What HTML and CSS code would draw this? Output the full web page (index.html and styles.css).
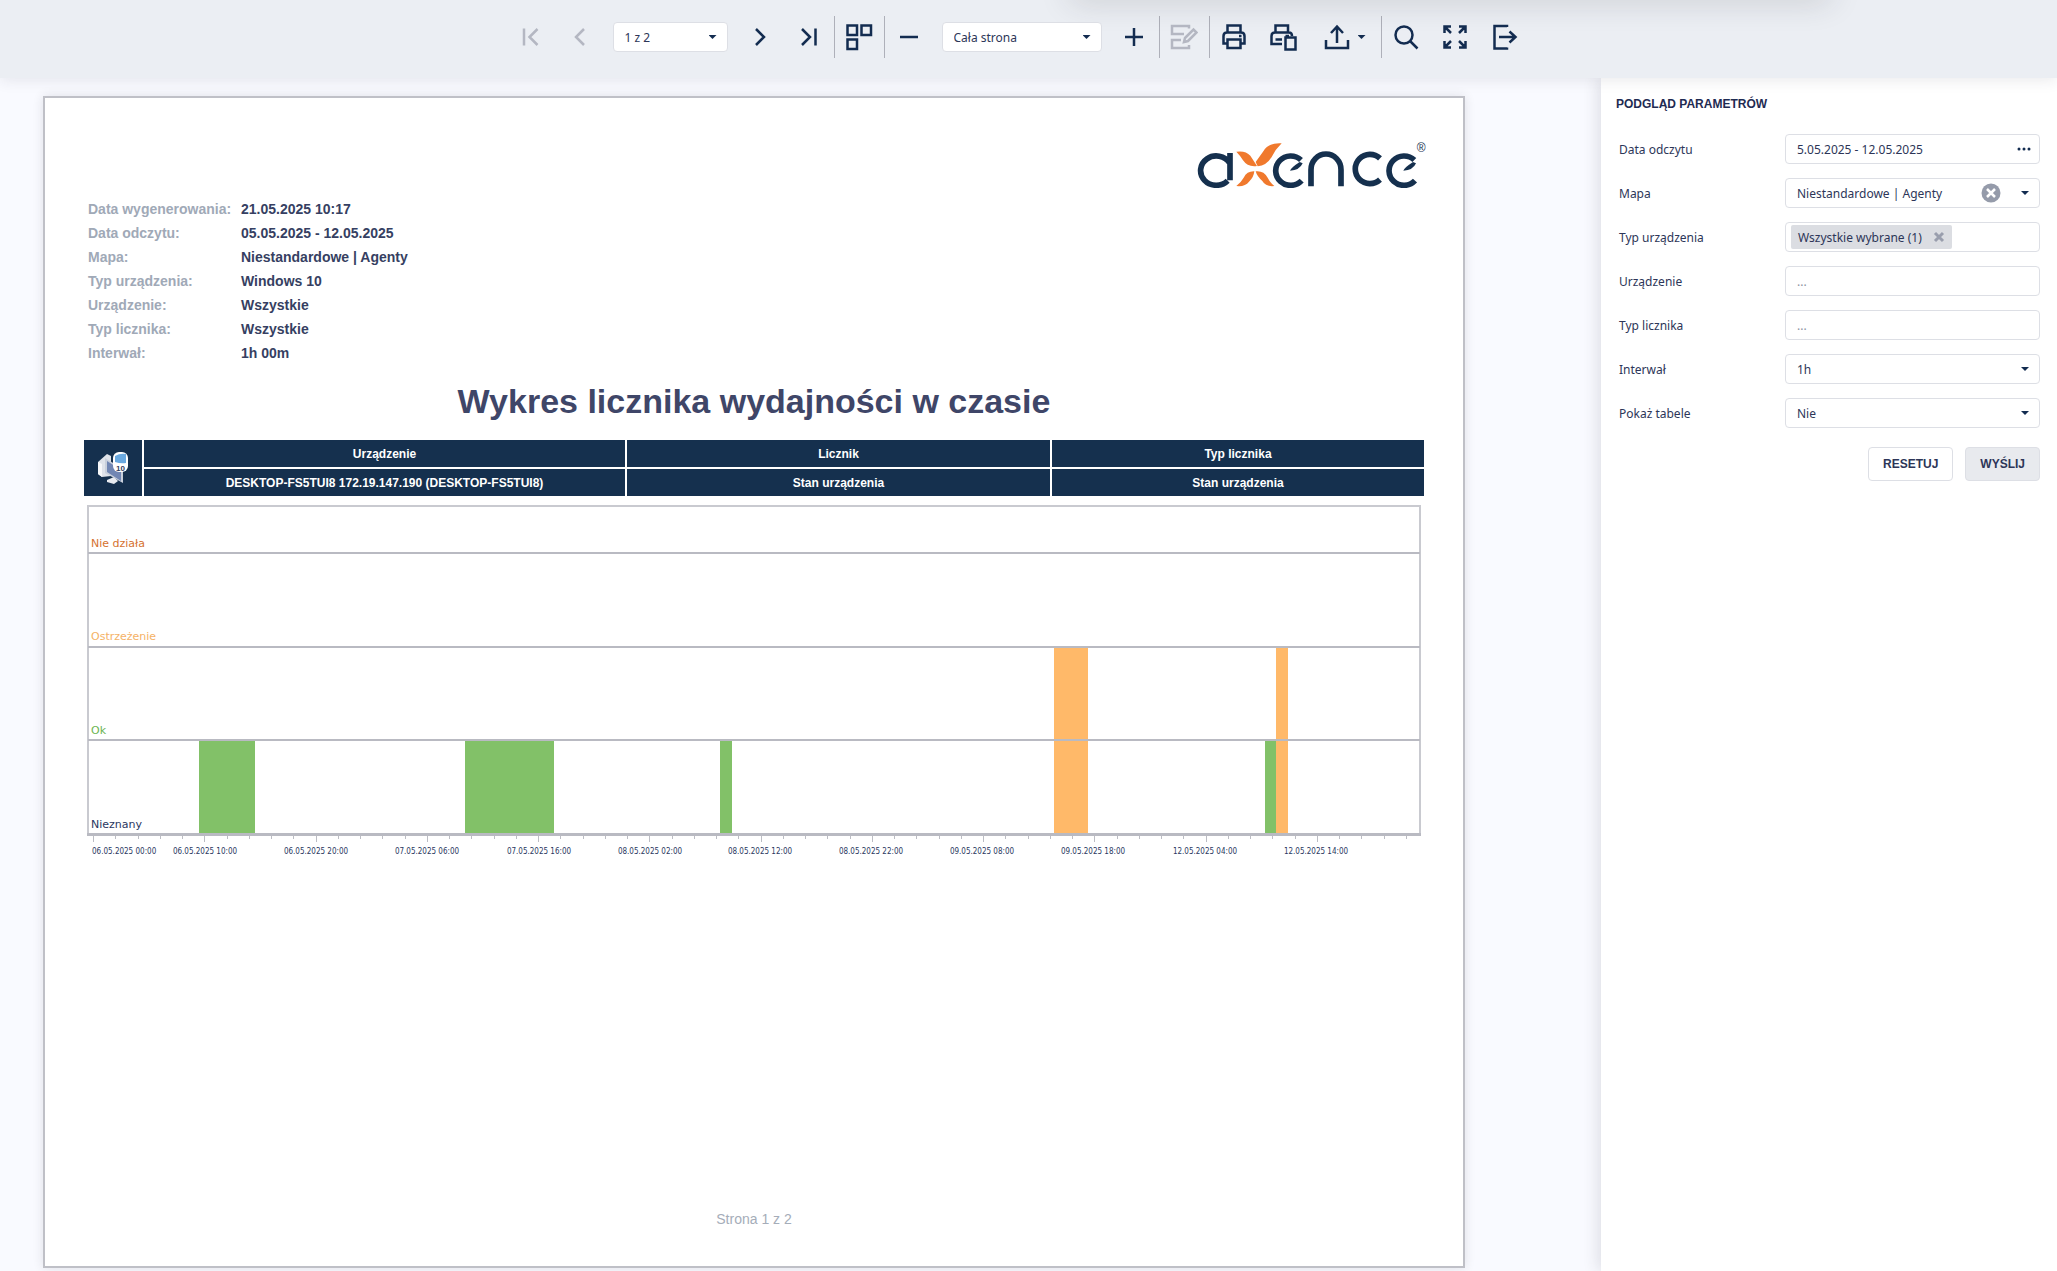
FILE: index.html
```html
<!DOCTYPE html>
<html lang="pl">
<head>
<meta charset="utf-8">
<meta name="viewport" content="width=device-width, initial-scale=1">
<title>Wykres licznika wydajności w czasie</title>
<link rel="stylesheet" href="styles.css">
</head>
<body class="app">
<header class="toolbar">
  <button class="tool" type="button" aria-label="Pierwsza strona" disabled><svg class="icon" viewBox="0 0 28 28"><path d="M7 5.500v17M20.500 6 12.500 14l8 8"/></svg></button>
  <button class="tool" type="button" aria-label="Poprzednia strona" disabled><svg class="icon" viewBox="0 0 28 28"><path d="M18 6l-8 8 8 8"/></svg></button>
  <div class="select select-page">
    <select class="select-input" aria-label="Strona"><option>1 z 2</option><option>2 z 2</option></select>
  </div>
  <button class="tool" type="button" aria-label="Następna strona"><svg class="icon" viewBox="0 0 28 28"><path d="M10 6l8 8-8 8"/></svg></button>
  <button class="tool" type="button" aria-label="Ostatnia strona"><svg class="icon" viewBox="0 0 28 28"><path d="M7 6l8 8-8 8M20.500 5.500v17"/></svg></button>
  <span class="divider"></span>
  <button class="tool" type="button" aria-label="Wiele stron"><svg class="icon" viewBox="0 0 28 28"><path d="M2.500 2.500h9.500v9.500H2.500zM16.500 2.500H26v9.500h-9.500zM2.500 16.500h9.500V26H2.500z"/></svg></button>
  <span class="divider"></span>
  <button class="tool" type="button" aria-label="Pomniejsz"><svg class="icon" viewBox="0 0 28 28"><path d="M5 14h18"/></svg></button>
  <div class="select select-zoom">
    <select class="select-input" aria-label="Powiększenie"><option>Cała strona</option><option>100%</option></select>
  </div>
  <button class="tool" type="button" aria-label="Powiększ"><svg class="icon" viewBox="0 0 28 28"><path d="M5 14h18M14 5v18"/></svg></button>
  <span class="divider"></span>
  <button class="tool" type="button" aria-label="Edytuj pola" disabled><svg class="icon" viewBox="0 0 28 28"><path d="M19 5.500V3H2v8h12M11 17H2v8h17v-3M14 19l1-4 8.500-8.500 3 3L18 18z"/></svg></button>
  <span class="divider"></span>
  <button class="tool" type="button" aria-label="Drukuj"><svg class="icon" viewBox="0 0 28 28"><path d="M7.500 9V2.500h13V9M7.500 20.500h-4V13q0-3.500 3.500-3.500h14q3.500 0 3.500 3.500v7.500h-4M7.500 16.500h13V25h-13zM19 13h2.500"/></svg></button>
  <button class="tool" type="button" aria-label="Drukuj stronę"><svg class="icon" viewBox="0 0 28 28"><path d="M6.500 9V2.500h12.500V9M13 21H2.500v-8q0-3.500 3.500-3.500h14q3 0 3 3.500M6.500 16.500H13M16.500 14.500H26.500V26.500H16.500zM16.500 13H20"/></svg></button>
  <button class="tool tool-export" type="button" aria-label="Eksportuj"><svg class="icon" viewBox="0 0 28 28"><path d="M3 17v8h22v-8M14 20V4M8 10l6-6.500 6 6.500"/></svg><span class="caret"></span></button>
  <span class="divider"></span>
  <button class="tool" type="button" aria-label="Szukaj"><svg class="icon" viewBox="0 0 28 28"><circle cx="12" cy="12" r="8.500"/><path d="M18 18l7.500 7.500"/></svg></button>
  <button class="tool" type="button" aria-label="Pełny ekran"><svg class="icon" viewBox="0 0 28 28"><path d="M3.500 10V3.500H10M4 4l6 6M18 3.500h6.500V10M24 4l-6 6M3.500 18v6.500H10M4 24l6-6M18 24.500h6.500V18M24 24l-6-6"/></svg></button>
  <button class="tool" type="button" aria-label="Wyjdź"><svg class="icon" viewBox="0 0 28 28"><path d="M17 4V3H4.500v22.500H17v-1M9 14h16M19.500 8.500 25.500 14l-6 5.500"/></svg></button>
</header>

<div class="workspace">
  <main class="viewer">
    <article class="paper">
      <svg class="logo" viewBox="138 155 690 138" role="img" aria-label="axence">
        <g fill="none" stroke="#15304e" stroke-width="17">
          <path d="M230 271A47 44 0 1 1 236 218M237 188v82"/>
          <path d="M452 271A45 44 0 1 1 450 209"/>
          <path d="M480 288v-50a45 47 0 0 1 90 0v50"/>
          <path d="M687 268A44 44 0 1 1 687 204"/>
          <path d="M792 271A45 44 0 1 1 790 209"/>
        </g>
        <g fill="#15304e">
          <path d="M417 241Q420 232 446 215L455 219Q446 240 417 241z"/>
          <path d="M757 241Q760 232 786 215L795 219Q786 240 757 241z"/>
        </g>
        <g fill="#f0792d">
          <path d="M256 184Q284 180 298 196L318 227Q290 231 276 210Q268 196 256 184z"/>
          <path d="M392 159Q352 156 336 184L314 215L320 228Q346 226 362 200Q374 176 392 159z"/>
          <path d="M256 287Q282 290 294 274Q308 262 310 243Q288 242 278 262Q270 276 256 287z"/>
          <path d="M370 287Q344 290 334 272Q318 258 314 243Q338 240 350 262Q358 278 370 287z"/>
        </g>
        <text class="logo-mark" x="797" y="186">®</text>
      </svg>

      <dl class="meta">
        <dt>Data wygenerowania:</dt><dd>21.05.2025 10:17</dd>
        <dt>Data odczytu:</dt><dd>05.05.2025 - 12.05.2025</dd>
        <dt>Mapa:</dt><dd>Niestandardowe | Agenty</dd>
        <dt>Typ urządzenia:</dt><dd>Windows 10</dd>
        <dt>Urządzenie:</dt><dd>Wszystkie</dd>
        <dt>Typ licznika:</dt><dd>Wszystkie</dd>
        <dt>Interwał:</dt><dd>1h 00m</dd>
      </dl>

      <h1 class="report-title">Wykres licznika wydajności w czasie</h1>

      <table class="summary">
        <colgroup><col class="col-icon"><col class="col-device"><col class="col-counter"><col class="col-type"></colgroup>
        <tr>
          <td rowspan="2" class="device-cell">
            <svg class="device" viewBox="0 0 30 32" role="img" aria-label="Windows 10">
              <path d="M0 10 9 2l4 2v20l-9 1-4-3z" fill="#dfe3ea"/>
              <path d="M0 10l4 2v13l-4-3z" fill="#f7f8fa"/>
              <path d="M9 28l7-3 4 4-4 3-7-2z" fill="#e8ebf0"/>
              <path d="M7 6l18 11v14L7 21z" fill="#c9d0dc"/>
              <path d="M9 9l14 9v11L9 20z" fill="#7186b3"/>
              <rect x="15" y="0" width="15" height="20" rx="6" fill="#fff"/>
              <path d="M17 4q5-3 11-2v9q-5 1-11-1z" fill="#6aa9e0"/>
              <text class="device-text" x="18" y="19">10</text>
            </svg>
          </td>
          <th scope="col">Urządzenie</th><th scope="col">Licznik</th><th scope="col">Typ licznika</th>
        </tr>
        <tr><td>DESKTOP-FS5TUI8 172.19.147.190 (DESKTOP-FS5TUI8)</td><td>Stan urządzenia</td><td>Stan urządzenia</td></tr>
      </table>

      <svg class="chart" viewBox="0 0 1334 354" role="img" aria-label="Stan urządzenia w czasie">
        <rect class="frame" x="1" y="1" width="1332" height="328"/>
        <g class="bar-ok">
          <rect x="112" y="236" width="56" height="93"/>
          <rect x="378" y="236" width="89" height="93"/>
          <rect x="633" y="236" width="12" height="93"/>
          <rect x="1178" y="236" width="11" height="93"/>
        </g>
        <g class="bar-warning">
          <rect x="967" y="142" width="34" height="187"/>
          <rect x="1189" y="142" width="12" height="187"/>
        </g>
        <path class="grid" d="M1 48H1333M1 142H1333M1 235H1333"/>
        <path class="axis" d="M0 329.500H1334"/>
        <path class="ticks" id="ticks"/>
        <g class="band-label">
          <text class="down" x="4" y="42">Nie działa</text>
          <text class="warning" x="4" y="135">Ostrzeżenie</text>
          <text class="ok" x="4" y="229">Ok</text>
          <text class="unknown" x="4" y="323">Nieznany</text>
        </g>
        <g class="time-label">
          <text class="time-first" x="5" y="349">06.05.2025 00:00</text>
          <text x="118" y="349">06.05.2025 10:00</text>
          <text x="229" y="349">06.05.2025 20:00</text>
          <text x="340" y="349">07.05.2025 06:00</text>
          <text x="452" y="349">07.05.2025 16:00</text>
          <text x="563" y="349">08.05.2025 02:00</text>
          <text x="673" y="349">08.05.2025 12:00</text>
          <text x="784" y="349">08.05.2025 22:00</text>
          <text x="895" y="349">09.05.2025 08:00</text>
          <text x="1006" y="349">09.05.2025 18:00</text>
          <text x="1118" y="349">12.05.2025 04:00</text>
          <text x="1229" y="349">12.05.2025 14:00</text>
        </g>
      </svg>

      <footer class="page-number">Strona 1 z 2</footer>
    </article>
  </main>

  <aside class="panel">
    <h2 class="panel-title">PODGLĄD PARAMETRÓW</h2>
    <form class="params">
      <label for="date">Data odczytu</label>
      <div class="field"><input class="field-input" id="date" type="text" value="5.05.2025 - 12.05.2025"><button class="field-button" type="button" aria-label="Wybierz zakres dat"><svg class="dots" viewBox="0 0 14 4"><circle cx="2" cy="2" r="1.500"/><circle cx="7" cy="2" r="1.500"/><circle cx="12" cy="2" r="1.500"/></svg></button></div>

      <label for="map">Mapa</label>
      <div class="select">
        <select class="select-input" id="map"><option>Niestandardowe | Agenty</option></select>
        <button class="clear" type="button" aria-label="Wyczyść"><svg class="clear-icon" viewBox="0 0 20 20"><circle cx="10" cy="10" r="9.500"/><path d="M6 6l8 8M14 6l-8 8"/></svg></button>
      </div>

      <label for="device-type">Typ urządzenia</label>
      <div class="field field-tags">
        <span class="tag">Wszystkie wybrane (1)<button class="tag-remove" type="button" aria-label="Usuń"><svg class="tag-icon" viewBox="0 0 12 12"><path d="M2 2l8 8M10 2l-8 8"/></svg></button></span>
        <input class="field-input" id="device-type" type="text">
      </div>

      <label for="device">Urządzenie</label>
      <div class="field"><input class="field-input" id="device" type="text" placeholder="..."></div>

      <label for="counter-type">Typ licznika</label>
      <div class="field"><input class="field-input" id="counter-type" type="text" placeholder="..."></div>

      <label for="interval">Interwał</label>
      <div class="select"><select class="select-input" id="interval"><option>1h</option></select></div>

      <label for="tables">Pokaż tabele</label>
      <div class="select"><select class="select-input" id="tables"><option>Nie</option><option>Tak</option></select></div>

      <div class="actions">
        <button class="action" type="reset">RESETUJ</button>
        <button class="action action-submit" type="button">WYŚLIJ</button>
      </div>
    </form>
  </aside>
</div>
<script src="chart.js"></script>
</body>
</html>
```
FILE: styles.css
```css
* { box-sizing: border-box; }

.app {
  margin: 0;
  min-height: 100vh;
  display: flex;
  flex-direction: column;
  background: #f9faff;
  color: #2d3658;
  font-family: "Noto Sans", "Open Sans", sans-serif;
  font-size: 12px;
}

button, input, select { font: inherit; color: inherit; }
button { padding: 0; border: 0; background: none; cursor: pointer; }

/* Toolbar */
.toolbar {
  position: relative;
  z-index: 1;
  display: flex;
  align-items: center;
  justify-content: center;
  height: 78px;
  padding: 0 22px 4px 0;
  background: #ebeef3;
  box-shadow: 0 2px 14px rgba(40, 40, 60, 0.1);
}

/* shade cast by the window above */
.toolbar::before {
  content: "";
  position: absolute;
  top: -20px;
  left: 52%;
  width: 37%;
  height: 20px;
  box-shadow: 0 0 32px rgba(40, 40, 50, 0.2);
}

.tool {
  position: relative;
  display: flex;
  flex: none;
  align-items: center;
  justify-content: center;
  width: 49px;
  height: 42px;
  color: #132c50;
}
.tool:disabled { color: #b4b7c2; }
.tool-export { gap: 7px; width: 73px; }

.icon {
  width: 28px;
  height: 28px;
  fill: none;
  stroke: currentColor;
  stroke-width: 2.5;
}

.divider { flex: none; width: 1px; height: 42px; background: #aeb0b9; }

.caret {
  width: 8px;
  height: 4px;
  background: #132c50;
  clip-path: polygon(0 0, 100% 0, 50% 100%);
}

/* Drop-downs and text boxes */
.select {
  position: relative;
  display: grid;
  grid-template-columns: minmax(0, 1fr);
  align-items: center;
}
.select::after {
  content: "";
  position: relative;
  grid-area: 1 / 1;
  justify-self: end;
  width: 8px;
  height: 4px;
  margin-right: 11px;
  background: #132c50;
  clip-path: polygon(0 0, 100% 0, 50% 100%);
  pointer-events: none;
}
.select-page { width: 115px; margin: 0 8px; }
.select-zoom { width: 160px; margin: 0 8px; }

.select-input {
  grid-area: 1 / 1;
  width: 100%;
  height: 30px;
  padding: 0 30px 0 11px;
  border: 1px solid #dddfe5;
  border-radius: 4px;
  background: #fff;
  appearance: none;
}

.field {
  display: flex;
  align-items: center;
  min-width: 0;
  height: 30px;
  border: 1px solid #dddfe5;
  border-radius: 4px;
  background: #fff;
}
.field-input {
  flex: 1;
  width: 0;
  min-width: 0;
  height: 28px;
  padding: 0 0 0 11px;
  border: 0;
  outline: 0;
  background: none;
}
.field-input::placeholder { color: #8e93a2; }
.field-button { display: flex; padding: 8px; }
.dots { width: 14px; height: 4px; fill: #132c50; }
.field-tags { padding-left: 5px; }

.tag {
  display: flex;
  flex: none;
  align-items: center;
  gap: 11px;
  height: 24px;
  padding: 0 7px;
  border-radius: 2px;
  background: #dbdde2;
}
.tag-remove { display: flex; }
.tag-icon { width: 12px; height: 12px; stroke: #999ead; stroke-width: 3; }

.clear { grid-area: 1 / 1; justify-self: end; display: flex; margin-right: 39px; }
.clear-icon { width: 20px; height: 20px; fill: #959baa; stroke: #fff; stroke-width: 2.5; }
.clear-icon circle { stroke: none; }

/* Report page */
.workspace { display: flex; flex: 1; }
.viewer { flex: 1; min-width: 0; padding: 18px 136px 3px 43px; }

.paper {
  display: flex;
  flex-direction: column;
  min-height: 1172px;
  padding: 44px 39px 39px;
  border: 2px solid #bfc0c7;
  background: #fff;
  box-shadow: 0 0 10px rgba(40, 40, 60, 0.12);
}

.logo { align-self: flex-end; width: 230px; height: 46px; margin-right: -3px; }
.logo-mark { font: 36px "Liberation Sans", sans-serif; fill: #15304e; }

.meta {
  display: grid;
  grid-template-columns: 153px 1fr;
  margin: 9px 0 0 4px;
  font: bold 14px/24px "Liberation Sans", sans-serif;
}
.meta dt { color: #a0a9b7; }
.meta dd { margin: 0; color: #363f62; }

.report-title {
  margin: 16px 0 19px;
  color: #3f4668;
  font: bold 34px/40px "Liberation Sans", sans-serif;
  text-align: center;
}

.summary {
  width: 100%;
  border-collapse: collapse;
  table-layout: fixed;
  color: #fff;
  font: bold 12px/16px "Liberation Sans", sans-serif;
  text-align: center;
}
.summary th, .summary td {
  height: 28px;
  padding: 0;
  border: 2px solid #fff;
  background: #15304e;
}
.summary tr:first-child > * { border-top: 0; }
.summary tr:last-child > *, .summary .device-cell { border-bottom: 0; }
.summary tr > :last-child { border-right: 0; }
.summary .device-cell { border-left: 0; }
.col-icon { width: 59px; }
.col-device { width: 483px; }
.col-counter { width: 425px; }
.device { display: block; width: 30px; height: 32px; margin: 0 auto; }
.device-text { font: bold 8px "Liberation Sans", sans-serif; fill: #33405e; }

.chart { display: block; margin: 9px 3px 0; }
.frame { fill: none; stroke: #c9cad0; stroke-width: 2; }
.grid { fill: none; stroke: #b9bac2; stroke-width: 2; }
.axis { stroke: #b9bac2; stroke-width: 3; }
.ticks { stroke: #bcbdc4; stroke-width: 1; }
.bar-ok { fill: #82c168; }
.bar-warning { fill: #ffb969; }
.band-label { font: 11px "DejaVu Sans", sans-serif; }
.down { fill: #d5712f; }
.warning { fill: #f5b266; }
.ok { fill: #6cb552; }
.unknown { fill: #2a3761; }
.time-label { font: 8px "DejaVu Sans Condensed", "Noto Sans", sans-serif; fill: #2a3761; text-anchor: middle; }
.time-first { text-anchor: start; }

.page-number {
  margin-top: auto;
  color: #a5adb9;
  font: 14px/16px "Liberation Sans", sans-serif;
  text-align: center;
}

/* Parameter panel */
.panel {
  flex: none;
  width: 456px;
  padding: 18px 17px 18px 15px;
  background: #fff;
  box-shadow: -4px 0 14px rgba(40, 40, 60, 0.12);
}
.panel-title {
  margin: 0 0 22px;
  color: #1f2b52;
  font: bold 12px/16px "Liberation Sans", sans-serif;
}
.params {
  display: grid;
  grid-template-columns: 166px minmax(0, 1fr);
  gap: 14px 0;
  align-items: center;
  padding-left: 3px;
}
.actions {
  grid-column: 1 / -1;
  display: flex;
  justify-content: flex-end;
  gap: 12px;
  margin-top: 5px;
}
.action {
  height: 34px;
  padding: 0 14px;
  border: 1px solid #dddfe5;
  border-radius: 4px;
  background: #fff;
  font: bold 12px/16px "Liberation Sans", sans-serif;
}
.action-submit { background: #e8eaee; }
```
FILE: chart.js
```js
// Hour marks on the time axis: a long tick for every labelled hour, four short ones after it.
let marks = "";
for (let i = 0; i < 60; i++) {
  const x = Math.round(6 + i * 22.25) + 0.5;
  marks += `M${x} 331v${i % 5 ? 3 : 6}`;
}
document.getElementById("ticks").setAttribute("d", marks);
```
